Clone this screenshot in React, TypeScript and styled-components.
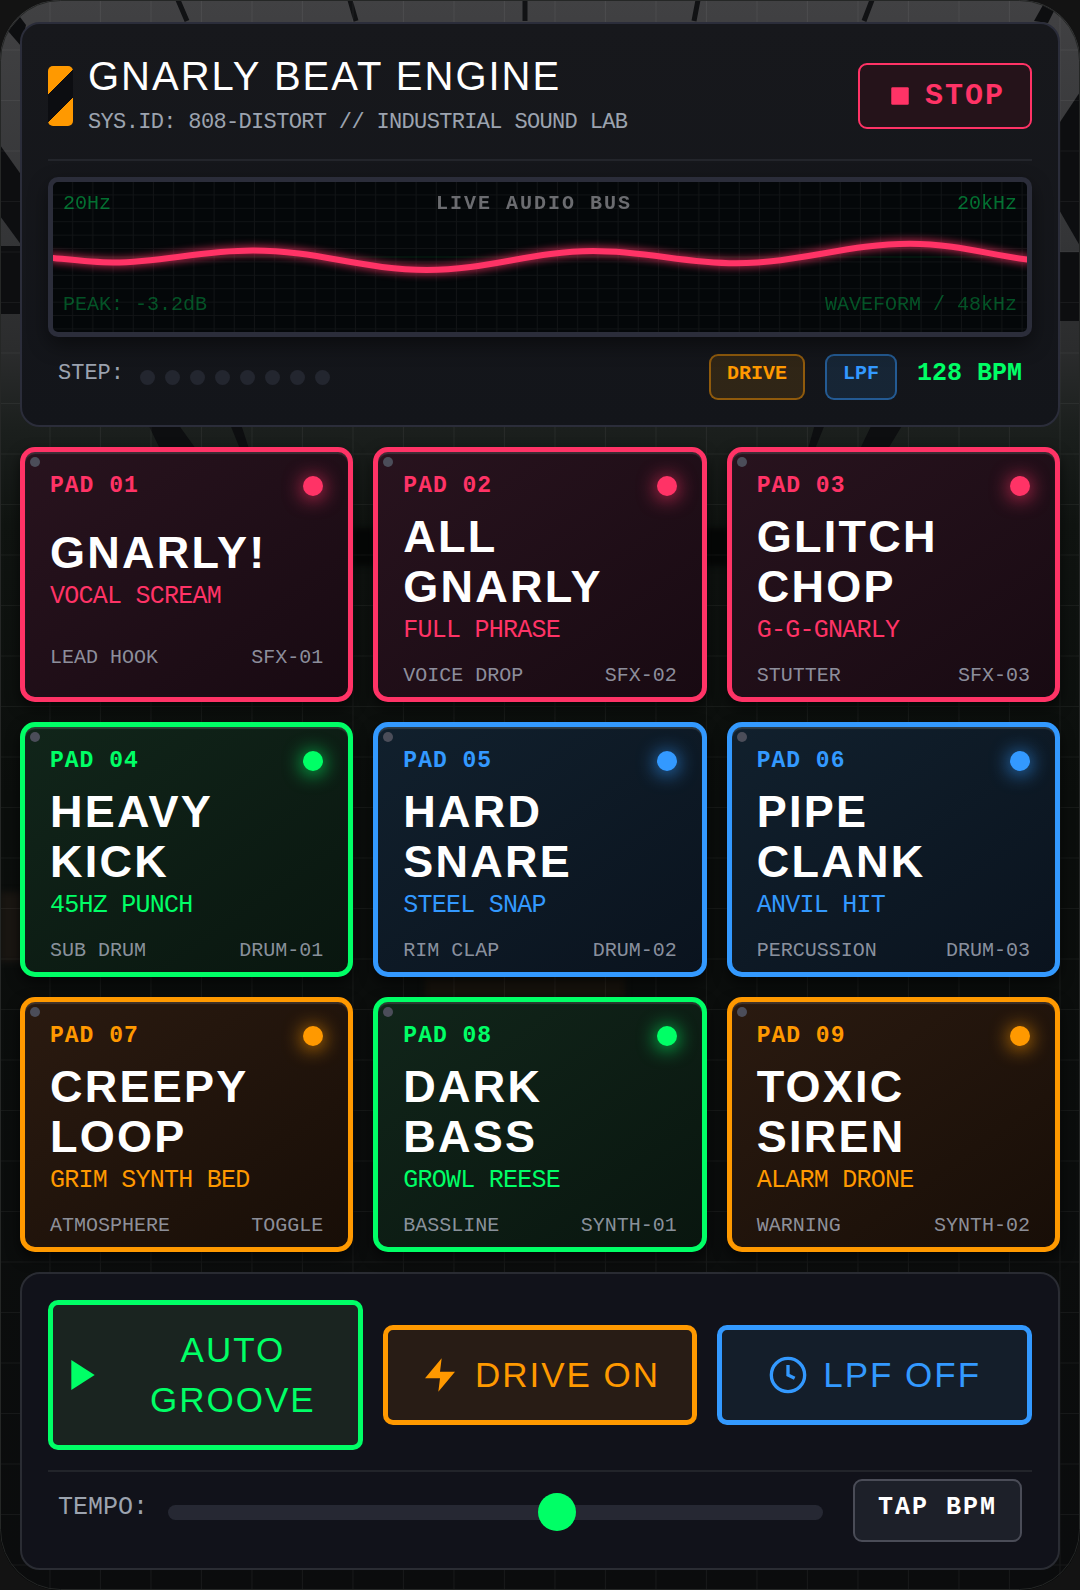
import React, { useState } from "react";
import styled, { createGlobalStyle } from "styled-components";

const PINK = "#ff3366";
const GREEN = "#00ff66";
const BLUE = "#3399ff";
const ORANGE = "#ff9900";
const SANS = '"Liberation Sans", Arial, sans-serif';
const MONO = '"Liberation Mono", "Courier New", monospace';

type Tone = "pink" | "green" | "blue" | "orange";

const tones: Record<Tone, { line: string; from: string; to: string }> = {
  pink: { line: PINK, from: "#28131e", to: "#180a12" },
  green: { line: GREEN, from: "#11251a", to: "#09160f" },
  blue: { line: BLUE, from: "#11202d", to: "#0a131e" },
  orange: { line: ORANGE, from: "#2a1a10", to: "#180e07" },
};

const GlobalStyle = createGlobalStyle`
  *, *::before, *::after { box-sizing: border-box; }
  body { margin: 0; background: #131313; font-family: ${SANS}; color: #fff; }
  button { font: inherit; color: inherit; cursor: pointer; margin: 0; }
`;

const Shell = styled.main`
  position: relative;
  display: flex;
  flex-direction: column;
  gap: 20px;
  padding: 22px 20px 20px;
  border-radius: 60px;
  overflow: hidden;
  isolation: isolate;
  background: #0a0c0b;
`;

const Scene = styled.svg`
  position: absolute;
  inset: 0;
  width: 100%;
  height: 100%;
  z-index: -1;
`;

const Panel = styled.section<{ $deep?: boolean }>`
  border: 2px solid ${(p) => (p.$deep ? "#2a2c33" : "#2b2d3a")};
  border-radius: 20px;
  padding: ${(p) => (p.$deep ? "26px" : "27px 26px 25px")};
  background: ${(p) => (p.$deep ? "#11121a" : "linear-gradient(#17181c, #13151a)")};
`;

const Header = styled.header`
  display: flex;
  align-items: center;
  justify-content: space-between;
  padding-bottom: 19px;
  border-bottom: 2px solid #23252b;
`;

const Brand = styled.div`
  display: flex;
  align-items: center;
  gap: 15px;
`;

const Hazard = styled.span`
  width: 25px;
  height: 60px;
  border-radius: 5px;
  background: linear-gradient(135deg, ${ORANGE} 20px, #0c0d11 20px 40px, ${ORANGE} 40px);
`;

const Title = styled.h1`
  margin: 0 0 5px;
  font-size: 40px;
  font-weight: 400;
  line-height: 50px;
  letter-spacing: 2px;
`;

const SystemId = styled.p`
  margin: 0;
  font: 22px/34px ${MONO};
  letter-spacing: -0.03em;
  color: #9ca3af;
`;

const StopButton = styled.button`
  display: flex;
  align-items: center;
  gap: 10px;
  padding: 8px 25px;
  border: 2px solid ${PINK};
  border-radius: 9px;
  background: #25131a;
  color: ${PINK};
  font: bold 30px/46px ${MONO};
  letter-spacing: 2px;
`;

const ScopeWrap = styled.div`
  margin-top: 16px;
  filter: drop-shadow(0 8px 10px rgba(0, 0, 0, 0.45));
`;

const Scope = styled.div`
  position: relative;
  height: 160px;
  border: 5px solid #2b2d3a;
  border-radius: 10px;
  overflow: hidden;
  background: #040709;
`;

const Trace = styled.svg`
  display: block;
  width: 100%;
  height: 100%;
`;

const Readouts = styled.div`
  position: absolute;
  inset: 0;
  display: flex;
  flex-direction: column;
  justify-content: space-between;
  padding: 7px 10px 12px;
  font: 20px/30px ${MONO};
`;

const ReadoutRow = styled.div<{ $dim?: boolean }>`
  display: flex;
  justify-content: space-between;
  color: ${(p) => (p.$dim ? "rgba(0, 255, 102, 0.3)" : "rgba(0, 255, 102, 0.42)")};
`;

const BusName = styled.strong`
  color: #6b6c70;
  letter-spacing: 2px;
`;

const StatusRow = styled.div`
  display: flex;
  align-items: center;
  justify-content: space-between;
  padding: 17px 10px 0;
`;

const Cluster = styled.div<{ $gap: number }>`
  display: flex;
  align-items: center;
  gap: ${(p) => p.$gap}px;
`;

const Caption = styled.span`
  padding-bottom: 7px;
  font: 22px/34px ${MONO};
  color: #9ca3af;
`;

const Steps = styled.div`
  display: flex;
  gap: 10px;
`;

const Step = styled.i`
  width: 15px;
  height: 15px;
  border-radius: 50%;
  background: #23262f;
`;

const Chip = styled.span<{ $tone: Tone }>`
  padding: 3px 16px 9px;
  border: 2px solid ${(p) => tones[p.$tone].line}77;
  border-radius: 9px;
  background: ${(p) => tones[p.$tone].line}1f;
  color: ${(p) => tones[p.$tone].line};
  font: bold 20px/30px ${MONO};
`;

const Bpm = styled.output`
  padding-bottom: 7px;
  font: bold 25px/34px ${MONO};
  color: ${GREEN};
`;

const PadGrid = styled.section`
  display: grid;
  grid-template-columns: repeat(3, minmax(0, 1fr));
  grid-auto-rows: 255px;
  gap: 20px;
`;

const Pad = styled.button<{ $tone: Tone }>`
  position: relative;
  display: flex;
  flex-direction: column;
  justify-content: space-between;
  align-items: stretch;
  padding: 17px 25px 24px;
  border: 5px solid ${(p) => tones[p.$tone].line};
  border-radius: 15px;
  background: linear-gradient(145deg, ${(p) => tones[p.$tone].from}, ${(p) => tones[p.$tone].to});
  box-shadow: inset 0 2px 1px rgba(255, 255, 255, 0.12), 0 6px 14px rgba(0, 0, 0, 0.6);
  color: ${(p) => tones[p.$tone].line};
  text-align: left;

  &::before {
    content: "";
    position: absolute;
    top: 5px;
    left: 5px;
    width: 10px;
    height: 10px;
    border-radius: 50%;
    background: #4b4d59;
  }
`;

const PadTop = styled.span`
  display: flex;
  align-items: center;
  justify-content: space-between;
  font: bold 23px/34px ${MONO};
  letter-spacing: 1px;
`;

const Led = styled.i`
  width: 20px;
  height: 20px;
  border-radius: 50%;
  background: currentColor;
  box-shadow: 0 2px 20px currentColor;
`;

const PadBody = styled.span`
  display: block;
  margin: 9px 0 11px;
`;

const PadName = styled.strong`
  display: block;
  font-size: 45px;
  line-height: 50px;
  letter-spacing: 0.05em;
  color: #fff;
`;

const PadSub = styled.span`
  display: block;
  font: 25px/38px ${MONO};
  letter-spacing: -0.03em;
`;

const PadFoot = styled.span`
  display: flex;
  justify-content: space-between;
  font: 20px/30px ${MONO};
  color: rgba(172, 178, 192, 0.8);
`;

const Actions = styled.div`
  display: grid;
  grid-template-columns: repeat(3, minmax(0, 1fr));
  align-items: center;
  gap: 20px;
  padding-bottom: 20px;
  border-bottom: 2px solid #22242a;
`;

const Action = styled.button<{ $tone: Tone; $fill: string }>`
  display: flex;
  align-items: center;
  justify-content: center;
  gap: 15px;
  padding: 20px 10px;
  border: 5px solid ${(p) => tones[p.$tone].line};
  border-radius: 10px;
  background: ${(p) => p.$fill};
  color: ${(p) => tones[p.$tone].line};
  font: 35px/50px ${SANS};
  letter-spacing: 2px;

  svg { flex: none; }
`;

const TempoRow = styled.div`
  display: flex;
  align-items: center;
  padding: 7px 10px 0;
`;

const TempoLabel = styled.label`
  padding-bottom: 6px;
  margin-right: 20px;
  font: 25px/38px ${MONO};
  color: #9ca3af;
`;

const Slider = styled.input`
  flex: 1;
  min-width: 0;
  height: 15px;
  margin: 3px 30px 0 0;
  border-radius: 8px;
  appearance: none;
  background: #262833;

  &::-webkit-slider-thumb {
    appearance: none;
    width: 38px;
    height: 38px;
    border-radius: 50%;
    background: ${GREEN};
  }
`;

const TapButton = styled.button`
  padding: 8px 23px 13px;
  border: 2px solid #4a4c57;
  border-radius: 9px;
  background: #1d2029;
  color: #fff;
  font: bold 25px/38px ${MONO};
  letter-spacing: 2px;
`;

const Backdrop = () => (
  <Scene viewBox="0 0 1080 1590" preserveAspectRatio="none" aria-hidden="true">
    <defs>
      <linearGradient id="haze" x1="0" y1="0" x2="0" y2="1">
        <stop offset="0" stopColor="#414143" />
        <stop offset="0.15" stopColor="#343537" />
        <stop offset="0.22" stopColor="#2b2c2d" />
        <stop offset="0.27" stopColor="#1b1f1d" />
        <stop offset="0.33" stopColor="#101411" />
        <stop offset="0.5" stopColor="#0b0e0c" />
        <stop offset="1" stopColor="#0b0c0d" />
      </linearGradient>
      <pattern id="cells" width="50.5" height="50.5" patternUnits="userSpaceOnUse">
        <path d="M50 0V50.5M0 50H50.5" stroke="#fff" strokeOpacity="0.05" />
      </pattern>
      <filter id="soft" colorInterpolationFilters="sRGB">
        <feGaussianBlur stdDeviation="3" />
      </filter>
    </defs>
    <rect width="1080" height="1590" fill="url(#haze)" />
    <g fill="#0d0e10">
      <path d="M8 31L20 17L26 25L21 46Z" />
      <path d="M0 145L22 176V246L0 216Z" />
      <path d="M0 246H24V314H0Z" />
      <path d="M1034 21L1043 5L1054 11L1048 23Z" />
      <path d="M1058 125L1080 92V246L1058 208Z" />
      <path d="M1056 252H1080V321H1056Z" />
      <path d="M148 424H178L196 449H160ZM230 424H241L249 449H240ZM872 424H903L888 449H860ZM815 424H825L815 449H808Z" />
    </g>
    <path d="M178 0L187 21M350 0L356 21M525 0V21M698 0L694 21M872 0L864 21" stroke="#111214" strokeWidth="5" />
    <g filter="url(#soft)">
      <path d="M352 528H376V566H352ZM702 528H730V566H702Z" fill="#060807" />
      <path d="M0 892H22V962H0Z" fill="#1a1612" />
      <path d="M425 976H625V998H425Z" fill="#17130d" />
    </g>
    <rect width="1080" height="1590" fill="url(#cells)" />
    <rect x="0.5" y="0.5" width="1079" height="1589" rx="60" fill="none" stroke="#252726" />
  </Scene>
);

const ScopeTrace = () => (
  <Trace viewBox="0 0 974 150" preserveAspectRatio="none" aria-hidden="true">
    <defs>
      <pattern id="scopeGrid" width="20.2" height="13.4" patternUnits="userSpaceOnUse">
        <path d="M19.7 0V13.4M0 12.9H20.2" stroke="#fff" strokeOpacity="0.05" />
      </pattern>
      <filter id="glow" x="-5%" y="-150%" width="110%" height="400%" colorInterpolationFilters="sRGB">
        <feGaussianBlur stdDeviation="4" />
      </filter>
    </defs>
    <rect width="974" height="150" fill="url(#scopeGrid)" />
    <path d="M0 75H974" stroke={GREEN} strokeOpacity="0.12" />
    {[true, false].map((blur) => (
      <path
        key={String(blur)}
        d="M-4 75.5C20 78 38 80.5 60 80.5C110 80.5 145 68.5 200 68.5C265 68.5 310 88 374 88C435 88 480 69 540 69C595 69 630 81.2 683 81.2C745 81.2 795 61.8 857 61.8C905 61.8 940 74 978 78"
        fill="none"
        stroke={PINK}
        strokeWidth="6"
        filter={blur ? "url(#glow)" : undefined}
      />
    ))}
  </Trace>
);

const StopIcon = () => (
  <svg width="30" height="30" viewBox="0 0 24 24" fill="currentColor" aria-hidden="true">
    <rect x="5" y="5" width="14" height="14" rx="1" />
  </svg>
);

const PlayIcon = () => (
  <svg width="40" height="40" viewBox="0 0 24 24" fill="currentColor" aria-hidden="true">
    <path d="M5 3l14 9-14 9V3z" />
  </svg>
);

const BoltIcon = () => (
  <svg width="40" height="40" viewBox="0 0 24 24" fill="currentColor" aria-hidden="true">
    <path d="M13 2L3 14h9l-1 8 10-12h-9l1-8z" />
  </svg>
);

const ClockIcon = () => (
  <svg width="40" height="40" viewBox="0 0 24 24" fill="none" stroke="currentColor" strokeWidth="2" aria-hidden="true">
    <circle cx="12" cy="12" r="10" />
    <path d="M12 6v6l4 2" />
  </svg>
);

const pads: { tone: Tone; name: string; sub: string; kind: string; slot: string }[] = [
  { tone: "pink", name: "GNARLY!", sub: "VOCAL SCREAM", kind: "LEAD HOOK", slot: "SFX-01" },
  { tone: "pink", name: "ALL GNARLY", sub: "FULL PHRASE", kind: "VOICE DROP", slot: "SFX-02" },
  { tone: "pink", name: "GLITCH CHOP", sub: "G-G-GNARLY", kind: "STUTTER", slot: "SFX-03" },
  { tone: "green", name: "HEAVY KICK", sub: "45HZ PUNCH", kind: "SUB DRUM", slot: "DRUM-01" },
  { tone: "blue", name: "HARD SNARE", sub: "STEEL SNAP", kind: "RIM CLAP", slot: "DRUM-02" },
  { tone: "blue", name: "PIPE CLANK", sub: "ANVIL HIT", kind: "PERCUSSION", slot: "DRUM-03" },
  { tone: "orange", name: "CREEPY LOOP", sub: "GRIM SYNTH BED", kind: "ATMOSPHERE", slot: "TOGGLE" },
  { tone: "green", name: "DARK BASS", sub: "GROWL REESE", kind: "BASSLINE", slot: "SYNTH-01" },
  { tone: "orange", name: "TOXIC SIREN", sub: "ALARM DRONE", kind: "WARNING", slot: "SYNTH-02" },
];

export default function App() {
  const [bpm, setBpm] = useState(128);

  return (
    <>
      <GlobalStyle />
      <Shell>
        <Backdrop />
        <Panel>
          <Header>
            <Brand>
              <Hazard />
              <div>
                <Title>GNARLY BEAT ENGINE</Title>
                <SystemId>SYS.ID: 808-DISTORT // INDUSTRIAL SOUND LAB</SystemId>
              </div>
            </Brand>
            <StopButton type="button">
              <StopIcon />
              STOP
            </StopButton>
          </Header>
          <ScopeWrap>
            <Scope>
              <ScopeTrace />
              <Readouts>
                <ReadoutRow>
                  <span>20Hz</span>
                  <BusName>LIVE AUDIO BUS</BusName>
                  <span>20kHz</span>
                </ReadoutRow>
                <ReadoutRow $dim>
                  <span>PEAK: -3.2dB</span>
                  <span>WAVEFORM / 48kHz</span>
                </ReadoutRow>
              </Readouts>
            </Scope>
          </ScopeWrap>
          <StatusRow>
            <Cluster $gap={16}>
              <Caption>STEP:</Caption>
              <Steps>
                {Array.from({ length: 8 }, (_, i) => (
                  <Step key={i} />
                ))}
              </Steps>
            </Cluster>
            <Cluster $gap={20}>
              <Chip $tone="orange">DRIVE</Chip>
              <Chip $tone="blue">LPF</Chip>
              <Bpm>{bpm} BPM</Bpm>
            </Cluster>
          </StatusRow>
        </Panel>

        <PadGrid>
          {pads.map((pad, i) => (
            <Pad key={pad.name} type="button" $tone={pad.tone}>
              <PadTop>
                PAD 0{i + 1}
                <Led />
              </PadTop>
              <PadBody>
                <PadName>{pad.name}</PadName>
                <PadSub>{pad.sub}</PadSub>
              </PadBody>
              <PadFoot>
                <span>{pad.kind}</span>
                <span>{pad.slot}</span>
              </PadFoot>
            </Pad>
          ))}
        </PadGrid>

        <Panel $deep>
          <Actions>
            <Action type="button" $tone="green" $fill="#1a2420">
              <PlayIcon />
              <span>AUTO GROOVE</span>
            </Action>
            <Action type="button" $tone="orange" $fill="#281c15">
              <BoltIcon />
              <span>DRIVE ON</span>
            </Action>
            <Action type="button" $tone="blue" $fill="#141e2a">
              <ClockIcon />
              <span>LPF OFF</span>
            </Action>
          </Actions>
          <TempoRow>
            <TempoLabel htmlFor="tempo">TEMPO:</TempoLabel>
            <Slider
              id="tempo"
              type="range"
              min={80}
              max={160}
              value={bpm}
              onChange={(e) => setBpm(Number(e.target.value))}
            />
            <TapButton type="button">TAP BPM</TapButton>
          </TempoRow>
        </Panel>
      </Shell>
    </>
  );
}
